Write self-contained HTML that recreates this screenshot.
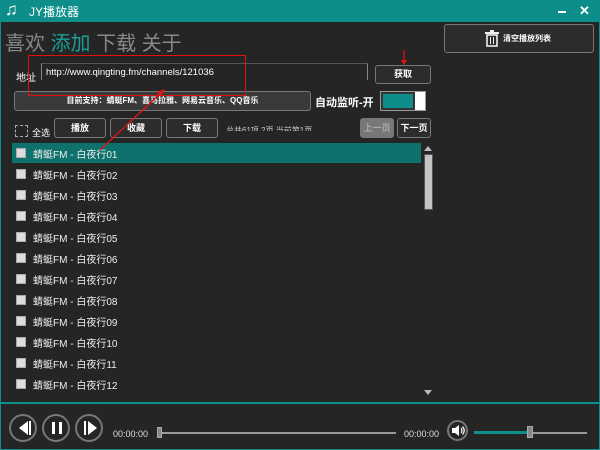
<!DOCTYPE html><html><head><meta charset="utf-8"><style>
*{margin:0;padding:0;box-sizing:border-box}
body{width:600px;height:450px;background:#252525;position:relative;overflow:hidden;font-family:"Liberation Sans","Noto Sans CJK SC",sans-serif;color:#fff}
.a{position:absolute}
.btn{position:absolute;border:1px solid #777;border-radius:3px;background:#2c2c2c;color:#fff;font-size:9px;font-weight:bold;text-align:center}
.row{position:absolute;left:12px;width:408px;height:21px;font-size:10px;color:#eee}
.row i{position:absolute;left:4px;top:5px;width:10px;height:10px;background:#ddd;border:1px solid #aaa}
.row span{position:absolute;left:21px;top:3px}
.circ{position:absolute;top:414px;width:28px;height:28px;border:2px solid #777;border-radius:50%}
</style></head><body>
<div class="a" style="left:0;top:0;width:600px;height:22px;background:#0e8e8a"></div>
<div class="a" style="left:5px;top:0px;font-size:17px;color:#fff">♫</div>
<div class="a" style="left:29px;top:3px;font-size:12px">JY播放器</div>
<div class="a" style="left:558px;top:11px;width:8px;height:2px;background:#fff"></div>
<div class="a" style="left:579px;top:3px;font-size:13px;font-weight:bold">✕</div>
<div class="a" style="left:0;top:22px;width:1px;height:428px;background:#0e8e8a"></div>
<div class="a" style="left:599px;top:22px;width:1px;height:428px;background:#0e8e8a"></div>
<div class="a" style="left:0;top:449px;width:600px;height:1px;background:#0e8e8a"></div>
<div class="a" style="left:5px;top:27px;font-size:20px;color:#888;letter-spacing:0">喜欢 <span style="color:#18a09a">添加</span> 下载 关于</div>
<div class="btn" style="left:444px;top:24px;width:150px;height:29px;line-height:27px;font-size:8px;padding-left:16px">清空播放列表</div>
<svg class="a" style="left:485px;top:30px" width="14" height="17"><rect x="0" y="2" width="14" height="2" fill="#eee"/><rect x="5" y="0" width="4" height="2" fill="#eee"/><rect x="2" y="5" width="10" height="11" fill="none" stroke="#eee" stroke-width="1.6"/><rect x="5" y="7" width="1" height="7" fill="#eee"/><rect x="8" y="7" width="1" height="7" fill="#eee"/></svg>
<div class="a" style="left:16px;top:69px;font-size:10px">地址</div>
<div class="a" style="left:41px;top:63px;width:327px;height:17px;border-left:1px solid #888;border-right:1px solid #888;border-top:1px solid #555"></div>
<div class="a" style="left:46px;top:67px;font-size:9.5px">http://www.qingting.fm/channels/121036</div>
<div class="btn" style="left:375px;top:65px;width:56px;height:19px;line-height:17px">获取</div>
<div class="btn" style="left:14px;top:91px;width:297px;height:20px;line-height:18px;background:#3a3a3a;font-size:8px">目前支持：蜻蜓FM、喜马拉雅、网易云音乐、QQ音乐</div>
<div class="a" style="left:315px;top:94px;font-size:11px;font-weight:bold">自动监听-开</div>
<div class="a" style="left:380px;top:91px;width:46px;height:20px;border:1px solid #999;background:#fff"><div style="width:34px;height:18px;background:#0e8e8a;border:2px solid #333"></div></div>
<div class="a" style="left:15px;top:125px;width:13px;height:12px;border:1px dashed #aaa"></div>
<div class="a" style="left:32px;top:126px;font-size:9px">全选</div>
<div class="btn" style="left:54px;top:118px;width:52px;height:20px;line-height:18px">播放</div>
<div class="btn" style="left:110px;top:118px;width:52px;height:20px;line-height:18px">收藏</div>
<div class="btn" style="left:166px;top:118px;width:52px;height:20px;line-height:18px">下载</div>
<div class="a" style="left:226px;top:125px;font-size:8px;color:#ccc;height:6px;overflow:hidden">总共61项 2页 当前第1页</div>
<div class="btn" style="left:360px;top:118px;width:34px;height:20px;line-height:18px;background:#777;color:#aaa">上一页</div>
<div class="btn" style="left:397px;top:118px;width:34px;height:20px;line-height:18px">下一页</div>
<div class="a" style="left:12px;top:143px;width:409px;height:20px;background:#0f716c"></div>
<div class="row" style="top:143px"><i></i><span>蜻蜓FM - 白夜行01</span></div>
<div class="row" style="top:164px"><i></i><span>蜻蜓FM - 白夜行02</span></div>
<div class="row" style="top:185px"><i></i><span>蜻蜓FM - 白夜行03</span></div>
<div class="row" style="top:206px"><i></i><span>蜻蜓FM - 白夜行04</span></div>
<div class="row" style="top:227px"><i></i><span>蜻蜓FM - 白夜行05</span></div>
<div class="row" style="top:248px"><i></i><span>蜻蜓FM - 白夜行06</span></div>
<div class="row" style="top:269px"><i></i><span>蜻蜓FM - 白夜行07</span></div>
<div class="row" style="top:290px"><i></i><span>蜻蜓FM - 白夜行08</span></div>
<div class="row" style="top:311px"><i></i><span>蜻蜓FM - 白夜行09</span></div>
<div class="row" style="top:332px"><i></i><span>蜻蜓FM - 白夜行10</span></div>
<div class="row" style="top:353px"><i></i><span>蜻蜓FM - 白夜行11</span></div>
<div class="row" style="top:374px"><i></i><span>蜻蜓FM - 白夜行12</span></div>
<div class="a" style="left:424px;top:146px;border:4px solid transparent;border-bottom:5px solid #bbb;border-top:0"></div>
<div class="a" style="left:424px;top:154px;width:9px;height:56px;background:#c4c4c4;border:1px solid #555"></div>
<div class="a" style="left:424px;top:390px;border:4px solid transparent;border-top:5px solid #bbb;border-bottom:0"></div>
<div class="a" style="left:0;top:402px;width:600px;height:2px;background:#0e8e8a"></div>
<div class="circ" style="left:9px"></div><div class="circ" style="left:42px"></div><div class="circ" style="left:75px"></div>
<svg class="a" style="left:9px;top:414px" width="100" height="28"><polygon points="19,7 19,21 10,14" fill="#fff"/><rect x="20" y="7" width="2" height="14" fill="#fff"/><rect x="43" y="8" width="3" height="12" fill="#fff"/><rect x="50" y="8" width="3" height="12" fill="#fff"/><rect x="75" y="7" width="2" height="14" fill="#fff"/><polygon points="79,7 79,21 88,14" fill="#fff"/></svg>
<div class="a" style="left:113px;top:429px;font-size:9px;color:#ddd">00:00:00</div>
<div class="a" style="left:160px;top:432px;width:236px;height:2px;background:#999"></div>
<div class="a" style="left:157px;top:427px;width:5px;height:11px;background:#888;border:1px solid #aaa"></div>
<div class="a" style="left:404px;top:429px;font-size:9px;color:#ddd">00:00:00</div>
<div class="a" style="left:447px;top:420px;width:21px;height:21px;border:2px solid #777;border-radius:50%"></div>
<svg class="a" style="left:451px;top:424px" width="14" height="13"><polygon points="1,4 4,4 8,1 8,12 4,9 1,9" fill="#fff"/><path d="M10 4q2 2.5 0 5M11.5 2.5q3.5 4 0 8" stroke="#fff" fill="none" stroke-width="1.2"/></svg>
<div class="a" style="left:474px;top:431px;width:56px;height:3px;background:#0e8e8a"></div>
<div class="a" style="left:530px;top:432px;width:57px;height:2px;background:#999"></div>
<div class="a" style="left:527px;top:426px;width:6px;height:12px;background:#888;border:1px solid #aaa"></div>
<div class="a" style="left:28px;top:55px;width:218px;height:41px;border:1px solid #d11"></div>
<svg class="a" style="left:0;top:0" width="600" height="450"><line x1="100" y1="150" x2="162" y2="92" stroke="#e11" stroke-width="1.2"/><polygon points="165,89 157,92 161,96" fill="#e11"/><line x1="404" y1="50" x2="404" y2="62" stroke="#e11" stroke-width="1.2"/><polygon points="401,60 407,60 404,65" fill="#e11"/></svg>
</body></html>
